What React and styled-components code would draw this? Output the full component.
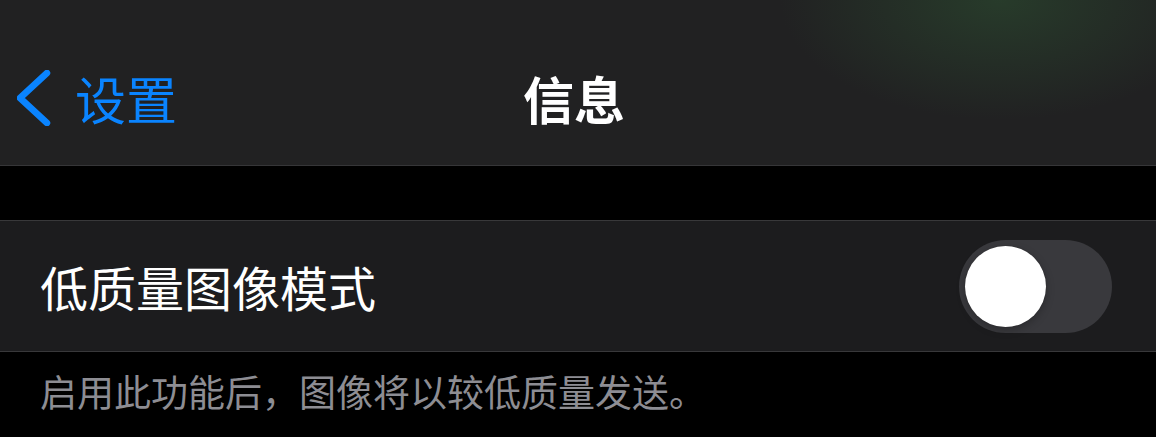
import React from 'react';
import styled, { createGlobalStyle } from 'styled-components';

const GlobalStyle = createGlobalStyle`
  html, body {
    margin: 0;
    padding: 0;
    background: #000;
    font-family: "Noto Sans CJK SC", "Noto Sans", sans-serif;
  }
`;

const Page = styled.div`
  width: 1156px;
  height: 437px;
  overflow: hidden;
  background: #000;
`;

const NavBar = styled.header`
  height: 166px;
  box-sizing: border-box;
  border-bottom: 1px solid #363638;
  display: grid;
  grid-template-columns: 1fr auto 1fr;
  align-items: center;
  padding: 31px 17px 0;
  background:
    radial-gradient(ellipse 220px 120px at 1000px 0px, rgba(42, 70, 46, 0.7), rgba(42, 70, 46, 0) 100%),
    #212122;
`;

const BackButton = styled.div`
  display: flex;
  align-items: center;
  gap: 22px;
  color: #0a84ff;
  font-size: 51px;
  line-height: 1;
`;

const Title = styled.h1`
  margin: 0;
  color: #fff;
  font-size: 51px;
  font-weight: 600;
  line-height: 1;
  transform: translateX(-4px);
`;

const Gap = styled.div`
  height: 54px;
`;

const Row = styled.div`
  height: 132px;
  box-sizing: border-box;
  border-top: 1px solid #38383a;
  border-bottom: 1px solid #38383a;
  background: #1c1c1e;
  display: flex;
  align-items: center;
  justify-content: space-between;
  padding: 0 44px 0 40px;
`;

const Label = styled.span`
  color: #fff;
  font-size: 48px;
  line-height: 1;
`;

const Track = styled.div`
  width: 153px;
  height: 93px;
  border-radius: 47px;
  background: #39393d;
  display: flex;
  align-items: center;
  padding-left: 6px;
  box-sizing: border-box;
`;

const Knob = styled.div`
  width: 81px;
  height: 81px;
  border-radius: 50%;
  background: #fff;
  box-shadow: 0 3px 8px rgba(0, 0, 0, 0.25), 0 0 1px rgba(0, 0, 0, 0.3);
`;

const Footer = styled.p`
  margin: 0;
  padding: 17px 40px 0;
  color: #8d8d93;
  font-size: 37px;
  line-height: 1.2;
`;

const Chevron = () => (
  <svg width="36" height="56" viewBox="0 0 36 56">
    <polyline
      points="30,3 3,28 30,53"
      fill="none"
      stroke="#0a84ff"
      strokeWidth="6.5"
      strokeLinecap="round"
      strokeLinejoin="round"
    />
  </svg>
);

export default function App() {
  return (
    <Page>
      <GlobalStyle />
      <NavBar>
        <BackButton>
          <Chevron />
          <span>设置</span>
        </BackButton>
        <Title>信息</Title>
        <div />
      </NavBar>
      <Gap />
      <Row>
        <Label>低质量图像模式</Label>
        <Track>
          <Knob />
        </Track>
      </Row>
      <Footer>启用此功能后，图像将以较低质量发送。</Footer>
    </Page>
  );
}
